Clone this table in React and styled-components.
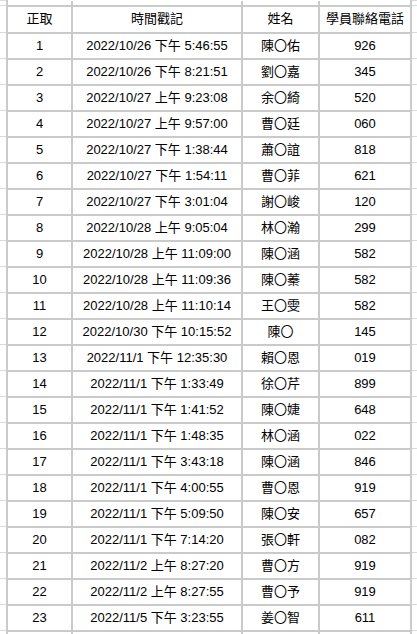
import React from "react";
import styled, { createGlobalStyle } from "styled-components";

const GlobalStyle = createGlobalStyle`
  html, body {
    margin: 0;
    padding: 0;
    background: #ffffff;
  }
  body {
    font-family: "Liberation Sans", Arial, "Noto Sans CJK TC", sans-serif;
    color: #000;
    overflow: hidden;
  }
`;

const records = [
  [1, "2022/10/26 下午 5:46:55", "陳〇佑", "926"],
  [2, "2022/10/26 下午 8:21:51", "劉〇嘉", "345"],
  [3, "2022/10/27 上午 9:23:08", "余〇綺", "520"],
  [4, "2022/10/27 上午 9:57:00", "曹〇廷", "060"],
  [5, "2022/10/27 下午 1:38:44", "蕭〇誼", "818"],
  [6, "2022/10/27 下午 1:54:11", "曹〇菲", "621"],
  [7, "2022/10/27 下午 3:01:04", "謝〇峻", "120"],
  [8, "2022/10/28 上午 9:05:04", "林〇瀚", "299"],
  [9, "2022/10/28 上午 11:09:00", "陳〇涵", "582"],
  [10, "2022/10/28 上午 11:09:36", "陳〇蓁", "582"],
  [11, "2022/10/28 上午 11:10:14", "王〇雯", "582"],
  [12, "2022/10/30 下午 10:15:52", "陳〇", "145"],
  [13, "2022/11/1 下午 12:35:30", "賴〇恩", "019"],
  [14, "2022/11/1 下午 1:33:49", "徐〇芹", "899"],
  [15, "2022/11/1 下午 1:41:52", "陳〇婕", "648"],
  [16, "2022/11/1 下午 1:48:35", "林〇涵", "022"],
  [17, "2022/11/1 下午 3:43:18", "陳〇涵", "846"],
  [18, "2022/11/1 下午 4:00:55", "曹〇恩", "919"],
  [19, "2022/11/1 下午 5:09:50", "陳〇安", "657"],
  [20, "2022/11/1 下午 7:14:20", "張〇軒", "082"],
  [21, "2022/11/2 上午 8:27:20", "曹〇方", "919"],
  [22, "2022/11/2 上午 8:27:55", "曹〇予", "919"],
  [23, "2022/11/5 下午 3:23:55", "姜〇智", "611"],
];

const Sheet = styled.table`
  border-collapse: collapse;
  table-layout: fixed;
  width: 417px;
  font-size: 13px;
`;

const Col = styled.col`
  width: ${p => p.$w}px;
`;

const Row = styled.tr`
  height: ${p => p.$h || 26}px;
`;

const Cell = styled.td`
  border: 2px solid #cacaca;
  padding: 0;
  text-align: center;
  vertical-align: middle;
  white-space: nowrap;
  overflow: hidden;
  line-height: 16px;
`;

const EdgeCell = styled.td`
  border-top: 1px solid #dadada;
  border-bottom: 1px solid #dadada;
  border-left: none;
  border-right: none;
  padding: 0;
`;

const StubCell = styled.td`
  border-left: 2px solid #cacaca;
  border-right: 2px solid #cacaca;
  border-top: none;
  border-bottom: none;
  padding: 0;
`;

const StubRow = ({ h }) => (
  <Row $h={h}>
    <EdgeCell />
    <StubCell />
    <StubCell />
    <StubCell />
    <StubCell />
    <EdgeCell />
  </Row>
);

const App = () => (
  <>
    <GlobalStyle />
    <Sheet>
      <colgroup>
        <Col $w={7} />
        <Col $w={65} />
        <Col $w={170} />
        <Col $w={77} />
        <Col $w={92} />
        <Col $w={6} />
      </colgroup>
      <tbody>
        <StubRow h={5} />
        <Row $h={27}>
          <EdgeCell />
          <Cell>正取</Cell>
          <Cell>時間戳記</Cell>
          <Cell>姓名</Cell>
          <Cell>學員聯絡電話</Cell>
          <EdgeCell />
        </Row>
        {records.map(([no, time, name, phone]) => (
          <Row key={no}>
            <EdgeCell />
            <Cell>{no}</Cell>
            <Cell>{time}</Cell>
            <Cell>{name}</Cell>
            <Cell>{phone}</Cell>
            <EdgeCell />
          </Row>
        ))}
        <StubRow h={6} />
      </tbody>
    </Sheet>
  </>
);

export default App;
